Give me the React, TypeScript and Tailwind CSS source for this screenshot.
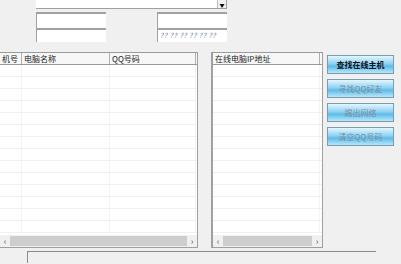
const font = { fontFamily: '"Noto Sans CJK SC", "Noto Sans", sans-serif' };

const rows = Array.from({ length: 14 });

function ScrollBar() {
	return (
		<div className="flex h-[12px] items-center bg-[#f0f0f0] text-[9px] leading-none text-[#606060]">
			<div className="flex w-[10px] justify-center">‹</div>
			<div className="h-[10px] flex-1 bg-[#cdcdcd]" />
			<div className="flex w-[10px] justify-center">›</div>
		</div>
	);
}

function ListView({ columns, noLeft }: { columns: { title: string; width: string }[]; noLeft?: boolean }) {
	return (
		<div
			className={`flex h-[196px] flex-col border border-[#a0a0a0] border-t-[#9a9a9a] bg-white ${
				noLeft ? "border-l-0" : "border-l-2"
			}`}
		>
			<div className="flex h-[12px] border-b border-[#9a9a9a] bg-[#f7f7f7] text-[8px] leading-[11px] text-[#222]">
				{columns.map((c, i) => (
					<div key={i} className={`${c.width} truncate border-r border-[#b0b0b0] pl-[2px]`}>
						{c.title}
					</div>
				))}
			</div>
			<div className="flex flex-1 flex-col overflow-hidden">
				{rows.map((_, i) => (
					<div key={i} className="flex h-[12px] shrink-0 border-b border-[#f0f0f0]">
						{columns.map((c, j) => (
							<div key={j} className={`${c.width} border-r border-[#f3f3f3]`} />
						))}
					</div>
				))}
			</div>
			<ScrollBar />
		</div>
	);
}

function Button({ label, active }: { label: string; active?: boolean }) {
	return (
		<button
			className={`h-[19px] w-[67px] border border-[#7a9cb0] bg-[linear-gradient(#e4f6fd,#8fd3f4_45%,#5dbbe8_60%,#b8e6fa)] text-[8px] leading-none ${
				active ? "font-bold text-[#111]" : "text-[#7d8f9a]"
			}`}
		>
			{label}
		</button>
	);
}

export default function App() {
	return (
		<div className="relative h-[264px] w-[401px] overflow-hidden bg-[#f0f0f0]" style={font}>
			<div className="pl-[36px]">
				<div className="flex h-[9px] w-[191px] border-b border-r border-[#a0a0a0] bg-white">
					<div className="flex-1" />
					<div className="flex h-[8px] w-[9px] items-center justify-center border-l border-[#c0c0c0] bg-[#f0f0f0] text-[5px] leading-none">
						▼
					</div>
				</div>
				<div className="mt-[3px] flex gap-[51px]">
					<div className="flex w-[70px] flex-col">
						<div className="h-[16px] border-l border-t-2 border-[#a0a0a0] bg-white" />
						<div className="h-[14px] border-l border-t-2 border-[#a0a0a0] bg-white" />
					</div>
					<div className="flex w-[70px] flex-col">
						<div className="h-[16px] border-l border-t-2 border-[#a0a0a0] bg-white" />
						<div className="h-[14px] border-l border-t-2 border-[#a0a0a0] bg-white pl-[2px] text-[7px] leading-[11px] tracking-[0.5px] text-[#7080a0] italic">
							?? ?? ?? ?? ?? ??
						</div>
					</div>
				</div>
			</div>
			<div className="mt-[10px] flex">
				<div className="w-[198px]">
					<ListView
						noLeft
						columns={[
							{ title: "机号", width: "w-[22px]" },
							{ title: "电脑名称", width: "w-[88px]" },
							{ title: "QQ号码", width: "w-[86px]" },
						]}
					/>
				</div>
				<div className="ml-[13px] w-[112px]">
					<ListView columns={[{ title: "在线电脑IP地址", width: "w-[107px]" }]} />
				</div>
				<div className="ml-[4px] mt-[3px] flex flex-col gap-[5px]">
					<Button label="查找在线主机" active />
					<Button label="寻找QQ好友" />
					<Button label="踢出网络" />
					<Button label="清空QQ号码" />
				</div>
			</div>
			<div className="ml-[27px] mt-[3px] h-[12px] w-[349px] border-l border-t border-[#8a8a8a]" />
		</div>
	);
}
